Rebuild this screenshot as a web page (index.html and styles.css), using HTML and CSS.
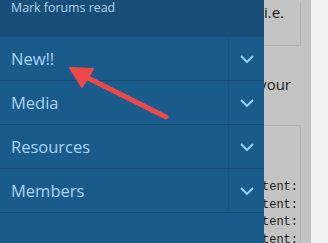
FILE: index.html
```html
<!DOCTYPE html>
<html lang="en">
<head>
    <meta charset="UTF-8">
    <title>Forum menu</title>
    <link rel="stylesheet" href="styles.css">
</head>
<body>

<!-- Halaman di belakang menu -->
<div class="page">
    <div class="content">
        <div class="box box-top">
            <p>wrap the code between the tags, i.e.</p>
        </div>
        <p class="note">Paste the following snippet into your</p>
        <div class="box code-box">
            <pre>    content:
    content:
    content:
    content:</pre>
        </div>
    </div>
    <div class="gutter"></div>
</div>

<!-- Menu samping -->
<div class="side-menu">
    <div class="menu-top">
        <a href="#">Mark forums read</a>
    </div>
    <div class="menu-row">
        <a href="#" class="menu-link">New!!</a>
        <span class="menu-toggle"><svg width="14" height="8" viewBox="0 0 14 8"><path d="M1 1l6 6 6-6" fill="none" stroke="currentColor" stroke-width="2"/></svg></span>
    </div>
    <div class="menu-row">
        <a href="#" class="menu-link">Media</a>
        <span class="menu-toggle"><svg width="14" height="8" viewBox="0 0 14 8"><path d="M1 1l6 6 6-6" fill="none" stroke="currentColor" stroke-width="2"/></svg></span>
    </div>
    <div class="menu-row">
        <a href="#" class="menu-link">Resources</a>
        <span class="menu-toggle"><svg width="14" height="8" viewBox="0 0 14 8"><path d="M1 1l6 6 6-6" fill="none" stroke="currentColor" stroke-width="2"/></svg></span>
    </div>
    <div class="menu-row">
        <a href="#" class="menu-link">Members</a>
        <span class="menu-toggle"><svg width="14" height="8" viewBox="0 0 14 8"><path d="M1 1l6 6 6-6" fill="none" stroke="currentColor" stroke-width="2"/></svg></span>
    </div>
</div>

<!-- Panah merah -->
<svg class="arrow" width="328" height="243" viewBox="0 0 328 243">
    <line x1="166" y1="117" x2="84" y2="76" stroke="#f04848" stroke-width="5" stroke-linecap="round"/>
    <polygon points="70,68 93,69 82,87" fill="#f04848" stroke="#f04848" stroke-width="2" stroke-linejoin="round"/>
</svg>

</body>
</html>
```

FILE: styles.css
```css
/* Dasar */
body {
    margin: 0;
    padding: 0;
    font-family: "Open Sans", Arial, sans-serif;
    background-color: #f1f1f1;
    overflow: hidden;
}

/* Halaman (redup) */
.page {
    display: flex;
    height: 243px;
    overflow: hidden;
}

.content {
    width: 311px;
    height: 243px;
    overflow: hidden;
    background-color: #c3c3c3;
    color: #1c1c1c;
}

.gutter {
    flex: 1;
    background-color: #f1f1f1;
}

.box {
    border: 1px solid #b2b2b2;
    margin-right: 10px;
}

.box-top {
    height: 44px;
    border-top: none;
    box-sizing: border-box;
}

.box-top p {
    margin: 2px 16px 0 0;
    text-align: right;
    font-size: 15px;
    line-height: 20px;
    white-space: nowrap;
}

.note {
    margin: 28px 20px 0 0;
    text-align: right;
    font-size: 15px;
    white-space: nowrap;
    line-height: 20px;
}

.code-box {
    margin-top: 31px;
    height: 140px;
    border-bottom: none;
}

.code-box pre {
    margin: 53px 2px 0 0;
    text-align: right;
    font-family: "Liberation Mono", monospace;
    font-size: 12px;
    line-height: 17.6px;
}

/* Menu samping */
.side-menu {
    position: absolute;
    top: 0;
    left: 0;
    width: 264px;
    height: 243px;
    background-color: #195b8b;
}

.side-menu a {
    color: #acd5f3;
    text-decoration: none;
}

.menu-top {
    height: 37px;
    background-color: #184e77;
    padding: 0 0 0 11px;
    box-sizing: border-box;
}

.menu-top a {
    display: block;
    font-size: 12.4px;
    line-height: 15px;
}

.menu-row {
    display: flex;
    height: 44px;
    border-bottom: 1px solid #174c74;
    box-sizing: border-box;
}

.menu-link {
    flex: 1;
    display: flex;
    align-items: center;
    padding-left: 11px;
    font-size: 16.5px;
}

.menu-toggle {
    width: 35px;
    display: flex;
    align-items: center;
    justify-content: center;
    border-left: 1px solid #1a5280;
    color: #90d2f8;
}

/* Panah */
.arrow {
    position: absolute;
    top: 0;
    left: 0;
}
```
